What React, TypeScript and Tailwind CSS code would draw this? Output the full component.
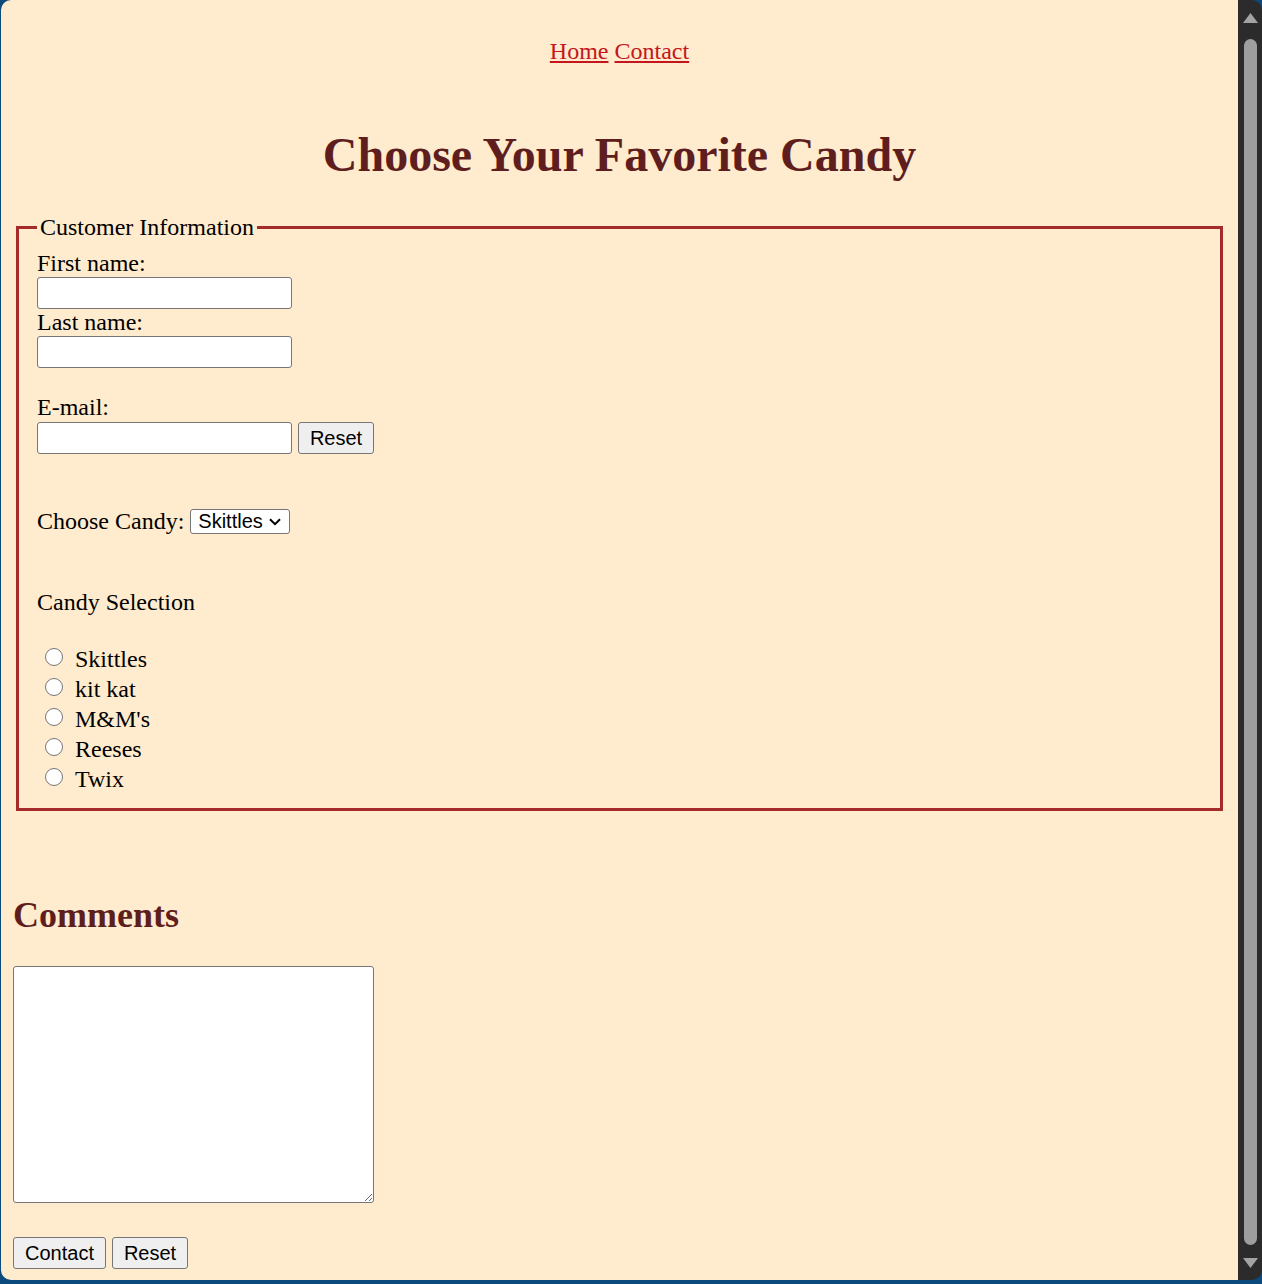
const candies = ['Skittles', 'kit kat', "M&M's", 'Reeses', 'Twix'];

function ScrollBar() {
  return (
    <div className="w-[24px] h-full bg-[#2b2b2b] rounded-r-[10px] flex flex-col items-center shrink-0">
      <svg width="15" height="10" viewBox="0 0 15 10" className="mt-[13px]">
        <path d="M7.5 0 L15 10 L0 10 Z" fill="#a3a3a3" />
      </svg>
      <div className="mt-[16px] w-[13px] h-[1206px] rounded-full bg-[#9e9e9e]" />
      <svg width="15" height="10" viewBox="0 0 15 10" className="mt-[13px]">
        <path d="M0 0 L15 0 L7.5 10 Z" fill="#a3a3a3" />
      </svg>
    </div>
  );
}

export default function App() {
  const control = "font-['Liberation_Sans',Arial,sans-serif] text-[20px] text-black";
  const textBox = 'block w-[255px] h-[32px] bg-white border border-[#767676] rounded-[3px]';
  const button =
    'h-[32px] bg-[#efefef] border border-[#767676] rounded-[3px] flex items-center justify-center leading-none';

  return (
    <div className="w-[1262px] h-[1284px] bg-[#0c4a7e] overflow-hidden">
      <div className="ml-[1px] h-[1280px] flex rounded-l-[10px] overflow-hidden">
        <div className="flex-1 bg-[#ffebcd] px-[12px] font-['Liberation_Serif','Times_New_Roman',serif] text-[24px] text-black">
          <nav className="mt-[37px] h-[28px] leading-[28px] text-center">
            <a href="#" className="text-[#c4161c] underline">Home</a>{' '}
            <a href="#" className="text-[#c4161c] underline">Contact</a>
          </nav>

          <h1 className="mt-[62px] text-center text-[48px] leading-[55px] font-bold text-[#5f1e1e]">
            Choose Your Favorite Candy
          </h1>

          <fieldset className="mt-[32px] mx-[3px] border-[3px] border-[#a52a2a] px-[18px] pt-[7px] pb-[14px]">
            <legend className="px-[3px] leading-[26px]">Customer Information</legend>

            <label className="block mt-[2px] leading-[28px]">First name:</label>
            <input type="text" className={textBox} />
            <label className="block leading-[27px]">Last name:</label>
            <input type="text" className={textBox} />

            <label className="block mt-[25px] leading-[29px]">E-mail:</label>
            <div className="flex gap-[6px]">
              <input type="email" className={textBox} />
              <button className={`${button} ${control} w-[76px]`}>Reset</button>
            </div>

            <div className="mt-[53px] h-[28px] flex items-center gap-[6px]">
              <span className="leading-[28px]">Choose Candy:</span>
              <div className="relative flex">
                <select
                  defaultValue="Skittles"
                  className={`${control} block appearance-none w-[100px] h-[25px] bg-white border border-[#767676] rounded-[3px] pl-[7px] leading-[23px]`}
                >
                  {candies.map((c) => (
                    <option key={c}>{c}</option>
                  ))}
                </select>
                <svg
                  width="12"
                  height="8"
                  viewBox="0 0 12 8"
                  className="absolute right-[9px] top-[9px] pointer-events-none"
                >
                  <path d="M1 1.2 L6 6.2 L11 1.2" fill="none" stroke="#000" strokeWidth="2" />
                </svg>
              </div>
            </div>

            <p className="mt-[53px] leading-[28px]">Candy Selection</p>

            <div className="mt-[28px] flex flex-col">
              {candies.map((c) => (
                <label key={c} className="h-[30px] leading-[30px] flex items-start">
                  <input
                    type="radio"
                    name="candy"
                    className="appearance-none mt-[4px] ml-[8px] w-[18px] h-[18px] rounded-full bg-white border-[1.5px] border-[#767676] shrink-0"
                  />
                  <span className="ml-[12px]">{c}</span>
                </label>
              ))}
            </div>
          </fieldset>

          <h2 className="mt-[84px] text-[36px] leading-[41px] font-bold text-[#5f1e1e]">Comments</h2>

          <textarea className="block mt-[30px] w-[361px] h-[237px] bg-white border border-[#767676] rounded-[3px]" />

          <div className="mt-[34px] flex gap-[6px]">
            <button className={`${button} ${control} w-[93px]`}>Contact</button>
            <button className={`${button} ${control} w-[76px]`}>Reset</button>
          </div>
        </div>
        <ScrollBar />
      </div>
    </div>
  );
}
